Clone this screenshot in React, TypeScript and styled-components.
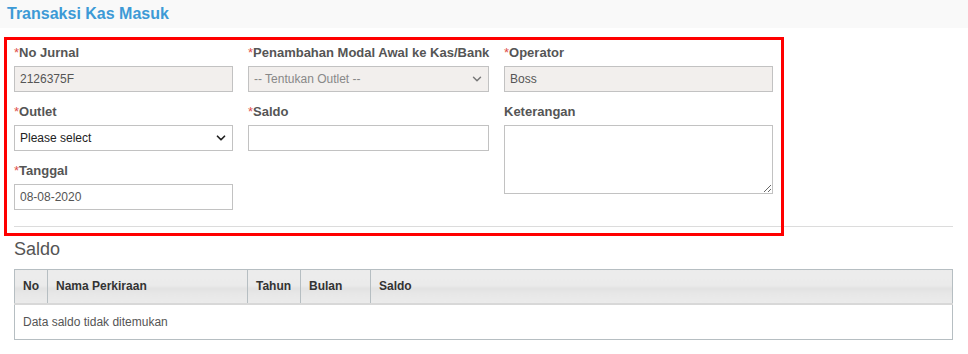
import React from "react";
import styled, { createGlobalStyle } from "styled-components";
import { ChevronDown } from "lucide-react";

const GlobalStyle = createGlobalStyle`
  body {
    margin: 0;
    background: #fff;
    font-family: "Liberation Sans", Arial, sans-serif;
    color: #555;
  }
`;

const Page = styled.div`
  position: relative;
  width: 968px;
  min-height: 354px;
`;

const TitleBar = styled.div`
  height: 28px;
  background: #f9f9f9;
  padding-left: 7px;
  display: flex;
  align-items: center;
`;

const Title = styled.h1`
  margin: 0;
  font-size: 16px;
  font-weight: bold;
  color: #3d9ad6;
`;

const Content = styled.div`
  padding: 16px 15px 0 14px;
`;

const FormGrid = styled.div`
  display: grid;
  grid-template-columns: 219px 241px 269px;
  column-gap: 15px;
  align-items: start;
`;

const Column = styled.div`
  display: flex;
  flex-direction: column;
`;

const Field = styled.div`
  display: flex;
  flex-direction: column;
  margin-bottom: 11px;
`;

const Label = styled.label`
  font-size: 13px;
  font-weight: bold;
  line-height: 18px;
  height: 18px;
  margin-bottom: 4px;
  color: #555;
  white-space: nowrap;
`;

const Star = styled.span`
  color: #e0504d;
  font-weight: normal;
`;

const Input = styled.input<{ $disabled?: boolean }>`
  box-sizing: border-box;
  height: 26px;
  width: 100%;
  margin: 0;
  padding: 0 5px;
  border: 1px solid #c2c2c2;
  border-radius: 0;
  background: ${(p) => (p.$disabled ? "#f2efed" : "#fff")};
  font-family: "Liberation Sans", Arial, sans-serif;
  font-size: 12px;
  color: #555;
  outline: none;
`;

const SelectWrap = styled.div`
  position: relative;
  height: 26px;
`;

const Select = styled.select<{ $disabled?: boolean }>`
  appearance: none;
  box-sizing: border-box;
  height: 26px;
  width: 100%;
  margin: 0;
  padding: 0 5px;
  border: 1px solid #c2c2c2;
  border-radius: 0;
  background: ${(p) => (p.$disabled ? "#f2efed" : "#fff")};
  font-family: "Liberation Sans", Arial, sans-serif;
  font-size: 12px;
  color: ${(p) => (p.$disabled ? "#888" : "#222")};
  outline: none;
  opacity: 1;
`;

const Chevron = styled.span<{ $disabled?: boolean }>`
  position: absolute;
  right: 5px;
  top: 6px;
  display: flex;
  color: ${(p) => (p.$disabled ? "#777" : "#222")};
  pointer-events: none;
`;

const TextArea = styled.textarea`
  box-sizing: border-box;
  height: 69px;
  width: 100%;
  margin: 0;
  padding: 4px 5px;
  border: 1px solid #c2c2c2;
  border-radius: 0;
  font-family: "Liberation Sans", Arial, sans-serif;
  font-size: 12px;
  color: #555;
  outline: none;
`;

const Divider = styled.hr`
  margin: 5px 0 0;
  border: 0;
  border-top: 1px solid #dcdcdc;
`;

const SectionTitle = styled.h2`
  margin: 12px 0 0;
  font-size: 18px;
  font-weight: normal;
  line-height: 21px;
  color: #555;
`;

const Table = styled.table`
  margin-top: 9px;
  width: 100%;
  table-layout: fixed;
  border-collapse: collapse;
  border: 1px solid #b6bec2;
  font-size: 12px;
`;

const HeadCell = styled.th<{ $w?: number }>`
  box-sizing: border-box;
  width: ${(p) => (p.$w ? `${p.$w}px` : "auto")};
  height: 34px;
  padding: 0 8px;
  text-align: left;
  font-weight: bold;
  color: #333;
  border-left: 1px solid #b6bec2;
  border-bottom: 2px solid #d8d8d8;
  background: linear-gradient(
    to bottom,
    #ececec 0%,
    #ebebeb 45%,
    #e2e2e2 55%,
    #e8e8e8 75%,
    #ebebeb 100%
  );
  &:first-child {
    border-left: 0;
  }
`;

const BodyCell = styled.td`
  height: 34px;
  padding: 0 8px;
  color: #555;
`;

const Highlight = styled.div`
  position: absolute;
  left: 4px;
  top: 37px;
  width: 780px;
  height: 199px;
  box-sizing: border-box;
  border: 3px solid #ff0000;
  pointer-events: none;
`;

const App = () => {
  return (
    <>
      <GlobalStyle />
      <Page>
        <TitleBar>
          <Title>Transaksi Kas Masuk</Title>
        </TitleBar>
        <Content>
          <FormGrid>
            <Column>
              <Field>
                <Label>
                  <Star>*</Star>No Jurnal
                </Label>
                <Input $disabled readOnly value="2126375F" />
              </Field>
              <Field>
                <Label>
                  <Star>*</Star>Outlet
                </Label>
                <SelectWrap>
                  <Select defaultValue="">
                    <option value="">Please select</option>
                  </Select>
                  <Chevron>
                    <ChevronDown size={14} strokeWidth={3} />
                  </Chevron>
                </SelectWrap>
              </Field>
              <Field>
                <Label>
                  <Star>*</Star>Tanggal
                </Label>
                <Input readOnly value="08-08-2020" />
              </Field>
            </Column>
            <Column>
              <Field>
                <Label>
                  <Star>*</Star>Penambahan Modal Awal ke Kas/Bank
                </Label>
                <SelectWrap>
                  <Select $disabled defaultValue="">
                    <option value="">-- Tentukan Outlet --</option>
                  </Select>
                  <Chevron $disabled>
                    <ChevronDown size={14} strokeWidth={2.5} />
                  </Chevron>
                </SelectWrap>
              </Field>
              <Field>
                <Label>
                  <Star>*</Star>Saldo
                </Label>
                <Input />
              </Field>
            </Column>
            <Column>
              <Field>
                <Label>
                  <Star>*</Star>Operator
                </Label>
                <Input $disabled readOnly value="Boss" />
              </Field>
              <Field>
                <Label>Keterangan</Label>
                <TextArea />
              </Field>
            </Column>
          </FormGrid>
          <Divider />
          <SectionTitle>Saldo</SectionTitle>
          <Table>
            <thead>
              <tr>
                <HeadCell $w={33}>No</HeadCell>
                <HeadCell $w={200}>Nama Perkiraan</HeadCell>
                <HeadCell $w={53}>Tahun</HeadCell>
                <HeadCell $w={70}>Bulan</HeadCell>
                <HeadCell>Saldo</HeadCell>
              </tr>
            </thead>
            <tbody>
              <tr>
                <BodyCell colSpan={5}>Data saldo tidak ditemukan</BodyCell>
              </tr>
            </tbody>
          </Table>
        </Content>
        <Highlight />
      </Page>
    </>
  );
};

export default App;
